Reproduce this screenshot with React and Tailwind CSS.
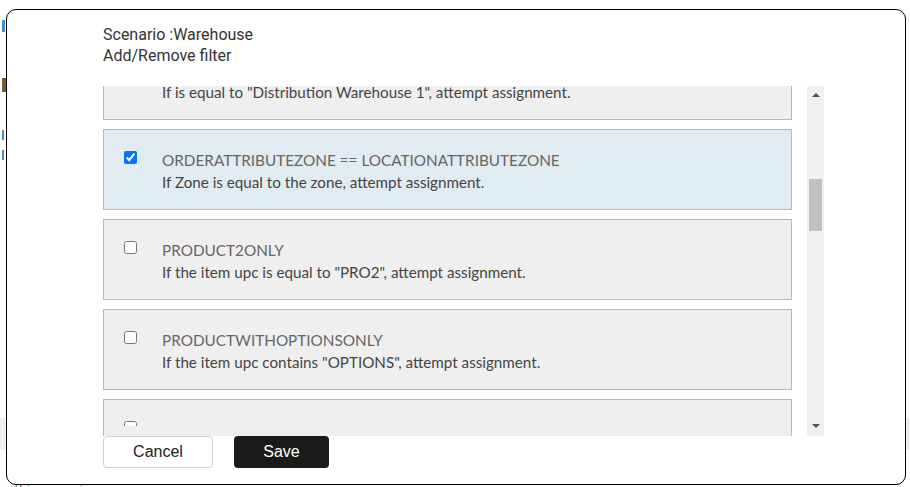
import { useEffect, useRef } from "react";

const filters = [
  {
    name: "LOCATIONNAME == DISTRIBUTIONWAREHOUSE1",
    desc: 'If is equal to "Distribution Warehouse 1", attempt assignment.',
    checked: false,
  },
  {
    name: "ORDERATTRIBUTEZONE == LOCATIONATTRIBUTEZONE",
    desc: "If Zone is equal to the zone, attempt assignment.",
    checked: true,
  },
  {
    name: "PRODUCT2ONLY",
    desc: 'If the item upc is equal to "PRO2", attempt assignment.',
    checked: false,
  },
  {
    name: "PRODUCTWITHOPTIONSONLY",
    desc: 'If the item upc contains "OPTIONS", attempt assignment.',
    checked: false,
  },
  { name: "", desc: "", checked: false, peek: true },
];

function FilterRow({ name, desc, checked, peek }) {
  return (
    <label
      className={`flex h-[81px] shrink-0 border border-[#b8b8b8] pl-5 pt-[21px] ${
        checked ? "bg-[#e1ebf2]" : "bg-[#efefef]"
      }`}
    >
      <div className={`shrink-0 ${peek ? "h-[5px] overflow-hidden" : ""}`}>
        <input type="checkbox" defaultChecked={checked} className="m-0 block h-[13px] w-[13px]" />
      </div>
      <div className="ml-[25px] -mt-[2px]">
        <div className="text-[15.3px] leading-[22px] text-[#666]">{name}</div>
        <div className="text-[15.2px] leading-[22px] text-[#444]">{desc}</div>
      </div>
    </label>
  );
}

function Scrollbar() {
  return (
    <div className="flex w-[17px] shrink-0 flex-col items-center bg-[#f1f1f1]">
      <div className="mt-[7px] h-0 w-0 border-x-[4px] border-b-[4px] border-x-transparent border-b-[#505050]" />
      <div className="mt-[82px] h-[52px] w-[13px] bg-[#c1c1c1]" />
      <div className="mt-auto mb-[8px] h-0 w-0 border-x-[4px] border-t-[4px] border-x-transparent border-t-[#505050]" />
    </div>
  );
}

export default function App() {
  const listRef = useRef(null);

  useEffect(() => {
    if (listRef.current) listRef.current.scrollTop = 47;
  }, []);

  return (
    <div
      className="relative h-[487px] w-[910px] overflow-hidden bg-white"
      style={{ fontFamily: "Lato, 'Liberation Sans', sans-serif" }}
    >
      {/* page behind the modal */}
      <div className="absolute left-[2px] top-[20px] h-[12px] w-[3px] bg-[#4a90c8]" />
      <div className="absolute left-[2px] top-[78px] h-[14px] w-[4px] bg-[#7a5a2a]" />
      <div className="absolute left-[2px] top-[130px] h-[10px] w-[2px] bg-[#4a90c8]" />
      <div className="absolute left-[2px] top-[150px] h-[10px] w-[2px] bg-[#4a90c8]" />
      <div className="absolute left-0 top-[418px] h-[32px] w-[6px] bg-[#eeeeee]" />
      <div className="absolute right-0 top-[418px] h-[32px] w-[5px] bg-[#eeeeee]" />
      <div className="absolute left-[14px] top-[478px] text-[14px] text-[#666]">this scenario</div>

      {/* modal */}
      <div className="absolute left-[6px] top-[9px] flex h-[476px] w-[900px] flex-col rounded-[10px] border-[1.5px] border-black bg-white pl-[96px] pr-[81px]">
        <div
          className="pt-[14px] text-[16px] leading-[21px] text-[#333]"
          style={{ fontFamily: "Roboto, 'Liberation Sans', sans-serif" }}
        >
          <div>Scenario :Warehouse</div>
          <div>Add/Remove filter</div>
        </div>

        <div className="mt-[20px] flex h-[350px] shrink-0">
          <div ref={listRef} className="flex flex-1 flex-col gap-[9px] overflow-hidden pr-[15px]">
            {filters.map((f, i) => (
              <FilterRow key={i} {...f} />
            ))}
          </div>
          <Scrollbar />
        </div>

        <div
          className="flex gap-[21px] text-[16px]"
          style={{ fontFamily: "'Liberation Sans', Arial, sans-serif" }}
        >
          <button className="h-[32px] w-[110px] rounded-[4px] border border-[#d0d0d0] bg-white text-[#222]">
            Cancel
          </button>
          <button className="h-[32px] w-[95px] rounded-[4px] bg-[#1a1a1a] text-white">Save</button>
        </div>
      </div>
    </div>
  );
}
